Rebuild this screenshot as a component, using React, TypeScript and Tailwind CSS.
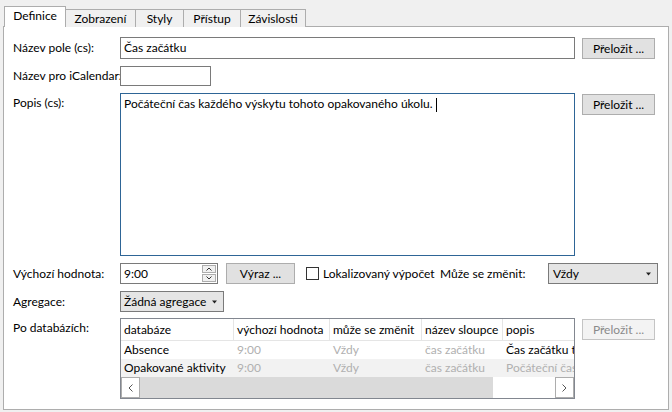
import React from 'react'

const font = { fontFamily: 'Lato, "Noto Sans", "Liberation Sans", sans-serif' }

function Btn({ children, disabled }: { children: React.ReactNode; disabled?: boolean }) {
  return (
    <div
      className={`w-[73px] h-[21px] flex items-center justify-center border text-[12px] whitespace-nowrap ${
        disabled ? 'border-[#c4c4c4] bg-[#f3f3f3] text-[#8a8a8a]' : 'border-[#adadad] bg-[#e1e1e1] text-black'
      }`}
    >
      {children}
    </div>
  )
}

function Label({ children, top }: { children: React.ReactNode; top?: boolean }) {
  return (
    <div className={`w-[107px] shrink-0 text-[12px] whitespace-nowrap ${top ? 'pt-[1px]' : 'self-center'}`}>{children}</div>
  )
}

function Caret() {
  return (
    <svg width="7" height="4" viewBox="0 0 7 4" className="shrink-0">
      <path d="M1 0.5h5L3.5 3.5z" fill="#222" />
    </svg>
  )
}

const tabs = ['Zobrazení', 'Styly', 'Přístup', 'Závislosti']
const tabW = ['w-[70px]', 'w-[48px]', 'w-[57px]', 'w-[65px]']

const cols = [
  { name: 'databáze', w: 'w-[113px]' },
  { name: 'výchozí hodnota', w: 'w-[96px]' },
  { name: 'může se změnit', w: 'w-[92px]' },
  { name: 'název sloupce', w: 'w-[81px]' },
  { name: 'popis', w: 'w-[72px]' },
]

const rows = [
  { db: 'Absence', val: '9:00', ch: 'Vždy', col: 'čas začátku', popis: 'Čas začátku t', dark: true, bg: 'bg-white' },
  { db: 'Opakované aktivity', val: '9:00', ch: 'Vždy', col: 'čas začátku', popis: 'Počáteční čas', dark: false, bg: 'bg-[#f2f2f2]' },
]

export default function App() {
  return (
    <div className="w-[672px] h-[412px] bg-[#f0f0f0] overflow-hidden text-black" style={font}>
      {/* tab strip */}
      <div className="flex items-end pl-[4px] pt-[6px] h-[27px] text-[12px] whitespace-nowrap">
        <div className="relative z-10 w-[62px] h-[21px] bg-white border border-b-0 border-[#adadad] flex items-center justify-center pb-[2px]">
          Definice
        </div>
        {tabs.map((t, i) => (
          <div
            key={t}
            className={`${tabW[i]} h-[18px] bg-[#f0f0f0] border border-l-0 border-b-0 border-[#adadad] flex items-center justify-center`}
          >
            {t}
          </div>
        ))}
      </div>

      {/* panel */}
      <div className="ml-[3px] w-[666px] h-[384px] -mt-px bg-white border border-[#adadad] pl-[9px] pt-[10px]">
        {/* Název pole */}
        <div className="flex h-[22px]">
          <Label>Název pole (cs):</Label>
          <div className="w-[455px] h-[22px] border border-[#7a7a7a] px-[3px] text-[12px] flex items-center">Čas začátku</div>
          <div className="ml-[7px] pt-[1px]">
            <Btn>Přeložit ...</Btn>
          </div>
        </div>

        {/* iCalendar */}
        <div className="flex h-[20px] mt-[7px]">
          <Label>Název pro iCalendar:</Label>
          <div className="w-[91px] h-[20px] border border-[#7a7a7a] bg-white" />
        </div>

        {/* Popis */}
        <div className="flex mt-[7px] h-[163px]">
          <Label top>Popis (cs):</Label>
          <div className="w-[455px] h-[163px] border border-[#2e6596] px-[3px] pt-[2px] text-[12px] leading-[16px]">
            Počáteční čas každého výskytu tohoto opakovaného úkolu.
            <span className="inline-block w-px h-[14px] bg-black align-middle ml-[3px]" />
          </div>
          <div className="ml-[7px] pt-[1px]">
            <Btn>Přeložit ...</Btn>
          </div>
        </div>

        {/* Výchozí hodnota */}
        <div className="flex items-center h-[21px] mt-[7px] text-[12px] whitespace-nowrap">
          <Label>Výchozí hodnota:</Label>
          <div className="w-[98px] h-[21px] border border-[#7a7a7a] flex items-center pl-[3px] pr-px">
            <span className="flex-1">9:00</span>
            <div className="flex flex-col gap-px">
              <div className="w-[14px] h-[8px] border border-[#adadad] bg-[#f0f0f0] flex items-center justify-center">
                <svg width="6" height="4" viewBox="0 0 6 4"><path d="M0.5 3.5L3 1l2.5 2.5" stroke="#333" fill="none" /></svg>
              </div>
              <div className="w-[14px] h-[8px] border border-[#adadad] bg-[#f0f0f0] flex items-center justify-center">
                <svg width="6" height="4" viewBox="0 0 6 4"><path d="M0.5 0.5L3 3l2.5-2.5" stroke="#333" fill="none" /></svg>
              </div>
            </div>
          </div>
          <div className="ml-[8px]">
            <div className="w-[69px] h-[21px] border border-[#adadad] bg-[#e1e1e1] flex items-center justify-center">Výraz ...</div>
          </div>
          <div className="ml-[11px] w-[13px] h-[13px] border border-[#333] bg-white shrink-0" />
          <span className="ml-[4px] w-[117px] shrink-0">Lokalizovaný výpočet</span>
          <span className="w-[108px] shrink-0">Může se změnit:</span>
          <div className="w-[110px] h-[21px] border border-[#7a7a7a] bg-[#e5e5e5] flex items-center pl-[4px] pr-[5px]">
            <span className="flex-1">Vždy</span>
            <Caret />
          </div>
        </div>

        {/* Agregace */}
        <div className="flex items-center h-[21px] mt-[7px] text-[12px] whitespace-nowrap">
          <Label>Agregace:</Label>
          <div className="w-[104px] h-[21px] border border-[#7a7a7a] bg-[#e5e5e5] flex items-center pl-[3px] pr-[5px]">
            <span className="flex-1">Žádná agregace</span>
            <Caret />
          </div>
        </div>

        {/* Po databázích */}
        <div className="flex mt-[6px] text-[12px]">
          <Label top>Po databázích:</Label>
          <div className="w-[455px] h-[81px] border border-[#828790] flex flex-col overflow-hidden">
            <div className="flex h-[22px] border-b border-[#e5e5e5] bg-white">
              {cols.map((c, i) => (
                <div
                  key={c.name}
                  className={`${c.w} shrink-0 px-[3px] flex items-center whitespace-nowrap overflow-hidden ${i < cols.length - 1 ? 'border-r border-[#e5e5e5]' : ''}`}
                >
                  {c.name}
                </div>
              ))}
            </div>
            {rows.map(r => (
              <div key={r.db} className={`flex h-[18px] items-center whitespace-nowrap ${r.bg}`}>
                <div className="w-[113px] shrink-0 px-[3px]">{r.db}</div>
                <div className="w-[96px] shrink-0 px-[3px] text-[#b0b0b0]">{r.val}</div>
                <div className="w-[92px] shrink-0 px-[3px] text-[#b0b0b0]">{r.ch}</div>
                <div className="w-[81px] shrink-0 px-[3px] text-[#b0b0b0]">{r.col}</div>
                <div className={`w-[72px] shrink-0 px-[3px] overflow-hidden ${r.dark ? 'text-black' : 'text-[#b0b0b0]'}`}>{r.popis}</div>
              </div>
            ))}
            <div className="flex h-[21px] bg-[#f0f0f0] mt-auto">
              <div className="w-[19px] h-[21px] border border-[#adadad] bg-white flex items-center justify-center">
                <svg width="5" height="8" viewBox="0 0 5 8"><path d="M4.5 0.5L1 4l3.5 3.5" stroke="#555" fill="none" /></svg>
              </div>
              <div className="w-[353px] h-[21px] bg-[#dadada]" />
              <div className="flex-1 bg-white" />
              <div className="w-[19px] h-[21px] border border-[#adadad] bg-white flex items-center justify-center">
                <svg width="5" height="8" viewBox="0 0 5 8"><path d="M0.5 0.5L4 4 0.5 7.5" stroke="#555" fill="none" /></svg>
              </div>
            </div>
          </div>
          <div className="ml-[7px] pt-[1px]">
            <Btn disabled>Přeložit ...</Btn>
          </div>
        </div>
      </div>
    </div>
  )
}
